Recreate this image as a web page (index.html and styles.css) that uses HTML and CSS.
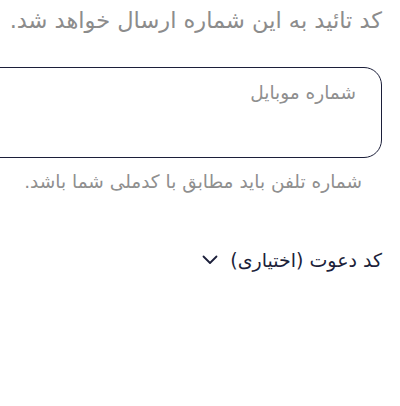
FILE: index.html
```html
<!DOCTYPE html>
<html lang="fa" dir="rtl">
<head>
<meta charset="utf-8">
<link rel="stylesheet" href="styles.css">
</head>
<body>
<div class="page">
  <p class="note">کد تائید به این شماره ارسال خواهد شد.</p>
  <div class="field">
    <span class="placeholder">شماره موبایل</span>
  </div>
  <p class="hint">شماره تلفن باید مطابق با کدملی شما باشد.</p>
  <div class="invite">
    <span class="invite-label">کد دعوت (اختیاری)</span>
    <svg class="chevron" width="16" height="10" viewBox="0 0 16 10" fill="none">
      <path d="M1.5 1.5 L8 8 L14.5 1.5" stroke="#1c1f3a" stroke-width="1.8" stroke-linecap="round" stroke-linejoin="round"/>
    </svg>
  </div>
</div>
</body>
</html>
```
FILE: styles.css
```css
html, body {
  margin: 0;
  padding: 0;
  background: #ffffff;
  overflow: hidden;
}
body {
  width: 400px;
  height: 406px;
  font-family: "DejaVu Sans", "Noto Sans", sans-serif;
}
.page {
  direction: rtl;
  padding-right: 18px;
  padding-top: 5px;
}
.note {
  margin: 0;
  font-size: 22.5px;
  line-height: 30px;
  color: #8c8c8c;
  white-space: nowrap;
}
.field {
  margin-top: 32px;
  margin-left: -30px;
  height: 77px;
  border: 1.5px solid #1c1f3a;
  border-radius: 18px;
  padding: 12px 25px 0 0;
  box-sizing: content-box;
}
.placeholder {
  font-size: 18.5px;
  line-height: 26px;
  color: #8f8f8f;
}
.hint {
  margin: 10px 20px 0 0;
  font-size: 18.5px;
  line-height: 28px;
  color: #8f8f8f;
  white-space: nowrap;
}
.invite {
  margin-top: 51px;
  display: flex;
  align-items: center;
  gap: 12px;
}
.invite-label {
  font-size: 19px;
  line-height: 26px;
  color: #1c1f3a;
}
.chevron {
  display: block;
}
```
